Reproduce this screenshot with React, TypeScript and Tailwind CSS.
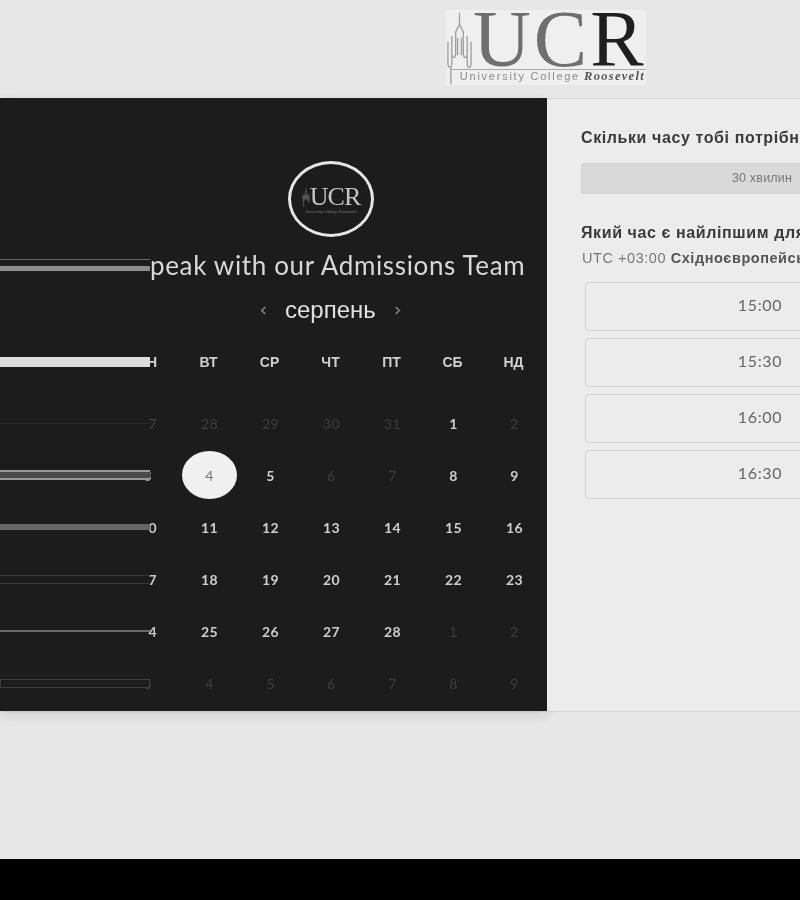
const sans = "font-['Liberation_Sans',Arial,sans-serif]";
const round = "font-['Lato',sans-serif]";

type Day = { t: string; dim?: boolean; sel?: boolean };
const d = (t: string | number, dim = false, sel = false): Day => ({ t: String(t), dim, sel });

const rows: { first: string; bar: string; firstCls: string; tight?: boolean; days: Day[] }[] = [
  { first: "7", bar: "h-px bg-[#2a2a2a]", firstCls: "text-[#444] font-normal", days: [d(28, true), d(29, true), d(30, true), d(31, true), d(1), d(2, true)] },
  { first: "3", tight: true, bar: "h-[10px] border-y-2 border-[#9a9a9a] bg-[#4a4a4a]", firstCls: "text-[#9a9a9a]", days: [d(4, false, true), d(5), d(6, true), d(7, true), d(8), d(9)] },
  { first: "0", bar: "h-[6px] bg-[#666]", firstCls: "text-[#c9c9c9]", days: [d(11), d(12), d(13), d(14), d(15), d(16)] },
  { first: "7", bar: "h-[9px] border-y border-[#3a3a3a]", firstCls: "text-[#c9c9c9]", days: [d(18), d(19), d(20), d(21), d(22), d(23)] },
  { first: "4", bar: "h-[2px] bg-[#6a6a6a]", firstCls: "text-[#c9c9c9]", days: [d(25), d(26), d(27), d(28), d(1, true), d(2, true)] },
  { first: "3", tight: true, bar: "h-[9px] border border-[#3d3d3d] bg-[#1c1c1c]", firstCls: "text-[#444] font-normal", days: [d(4, true), d(5, true), d(6, true), d(7, true), d(8, true), d(9, true)] },
];

function Tower({ className }: { className: string }) {
  return (
    <svg viewBox="0 0 28 76" fill="none" stroke="#a0a0a0" strokeWidth="1.4" className={className}>
      <path d="M14 2V16M10 22L14 14L18 22V46M10 22V46M6 26V44C6 50 10 50 10 44M22 26V44C22 50 18 50 18 44M2 32V54C2 60 6 60 6 54V34M26 32V54C26 60 22 60 22 54V34M12 28V46M16 28V46M5 58V76" />
    </svg>
  );
}

function BigLogo() {
  return (
    <div className="flex w-[200px] h-[75px] bg-[#efefef]">
      <Tower className="w-[27px] h-[75px] shrink-0" />
      <div className="flex flex-col pt-[2px] min-w-0">
        <div className="font-['Liberation_Serif',serif] text-[80px] leading-[54px] tracking-[3px] h-[57px] text-[#6f6f6f] whitespace-nowrap">
          UC<span className="text-[#1f1f1f]">R</span>
        </div>
        <div className="-ml-[22px] w-[195px] border-t border-[#aaa] flex items-center justify-end gap-[4px] pr-[1px] whitespace-nowrap h-[13px]">
          <span className={`${sans} text-[11px] leading-[12px] tracking-[1.75px] text-[#8a8a8a]`}>University College</span>
          <span className="font-['Liberation_Serif',serif] italic font-bold text-[12.5px] leading-[12px] tracking-[1.3px] text-[#555]">Roosevelt</span>
        </div>
      </div>
    </div>
  );
}

export default function App() {
  return (
    <div className="w-[800px] h-[900px] overflow-hidden bg-black flex flex-col">
      <div className="h-[859px] bg-[#e7e7e7] flex flex-col shrink-0 blur-[0.4px]">
        <div className="h-[98px] flex justify-center pt-[10px] pl-[292px] shrink-0">
          <BigLogo />
        </div>
        <div className="h-[614px] flex shrink-0 border-b border-[#d8d8d8]">
          <div className="w-[547px] shrink-0 bg-[#1c1c1c] text-[#e4e4e4] flex flex-col shadow-[0_4px_12px_rgba(0,0,0,0.12)]">
            <div className="pl-[288px] pt-[63px]">
              <div className="w-[86px] h-[76px] rounded-[50%] border-[3px] border-[#e6e6e6] flex items-center justify-center">
                <div className="flex flex-col items-center">
                  <div className="flex items-center">
                    <Tower className="w-[8px] h-[20px]" />
                    <span className="font-['Liberation_Serif',serif] text-[26px] leading-[24px] tracking-[-1px] text-[#c4c4c4]">UCR</span>
                  </div>
                  <span className={`${sans} text-[4px] leading-[5px] text-[#777] whitespace-nowrap`}>University College Roosevelt</span>
                </div>
              </div>
            </div>

            <div className="flex items-center h-[34px] mt-[11px]">
              <div className="w-[150px] shrink-0 flex flex-col">
                <div className="h-px bg-[#6a6a6a]" />
                <div className="h-[5px] mt-[6px] bg-[#8d8d8d]" />
              </div>
              <span className={`${round} text-[26px] leading-[34px] tracking-[0.65px] text-[#d8d8d8] whitespace-nowrap`}>peak with our Admissions Team</span>
            </div>

            <div className={`flex items-center h-[32px] mt-[12px] pl-[259px] ${sans}`}>
              <svg viewBox="0 0 10 12" className="w-[9px] h-[11px] mr-[17px]" fill="none" stroke="#8a8a8a" strokeWidth="1.6"><path d="M7 2L3 6L7 10" /></svg>
              <span className="text-[24px] leading-[32px] text-[#e0e0e0]">серпень</span>
              <svg viewBox="0 0 10 12" className="w-[9px] h-[11px] ml-[17px]" fill="none" stroke="#8a8a8a" strokeWidth="1.6"><path d="M3 2L7 6L3 10" /></svg>
            </div>

            <div className={`flex items-center h-[20px] mt-[26px] ${sans} text-[14px] font-bold text-[#d0d0d0]`}>
              <div className="w-[178px] pr-[21px] shrink-0 flex items-center">
                <div className="w-[150px] h-[10px] bg-[#dcdcdc] relative z-10 shrink-0" />
                <span className="w-[7px] flex justify-end">Н</span>
              </div>
              {["ВТ", "СР", "ЧТ", "ПТ", "СБ", "НД"].map((x) => (
                <div key={x} className="w-[61px] text-center shrink-0">{x}</div>
              ))}
            </div>

            <div className={`flex flex-col mt-[25px] ${round} text-[14px] font-bold tracking-[0.4px]`}>
              {rows.map((r, i) => (
                <div key={i} className="h-[52px] flex items-center shrink-0">
                  <div className="w-[179px] shrink-0 flex items-center">
                    <div className={`w-[150px] shrink-0 relative z-10 ${r.bar}`} />
                    <span className={`${r.tight ? "w-[2px]" : "w-[7px]"} flex justify-end ${r.firstCls}`}>{r.first}</span>
                  </div>
                  {r.days.map((c, j) => (
                    <div key={j} className="w-[61px] shrink-0 flex justify-center">
                      {c.sel ? (
                        <div className="w-[55px] h-[48px] rounded-[50%] bg-[#f0f0f0] text-[#777] font-normal flex items-center justify-center">{c.t}</div>
                      ) : (
                        <span className={c.dim ? "text-[#3e3e3e] font-normal" : "text-[#cfcfcf]"}>{c.t}</span>
                      )}
                    </div>
                  ))}
                </div>
              ))}
            </div>
          </div>

          <div className={`w-[400px] shrink-0 bg-[#ececec] border-t border-[#d9d9d9] pl-[34px] ${sans}`}>
            <div className="mt-[29px] text-[16px] leading-[20px] font-bold tracking-[0.6px] text-[#3a3a3a] whitespace-nowrap">Скільки часу тобі потрібно?</div>
            <div className="mt-[15px] w-[362px] h-[31px] rounded-[3px] bg-[#d9d9d9] border border-[#d2d2d2] flex items-center justify-center text-[12.5px] tracking-[0.2px] text-[#777]">30 хвилин</div>
            <div className="mt-[29px] text-[16px] leading-[20px] font-bold tracking-[0.6px] text-[#3a3a3a] whitespace-nowrap">Який час є найліпшим для тебе?</div>
            <div className="mt-[5px] text-[14.5px] leading-[20px] tracking-[0.55px] text-[#777] whitespace-nowrap pl-[1px]">
              UTC +03:00 <span className="font-bold text-[#555]">Східноєвропейський час</span>
            </div>
            <div className="mt-[14px] ml-[4px] flex flex-col gap-[7px]">
              {["15:00", "15:30", "16:00", "16:30"].map((t) => (
                <div key={t} className={`w-[350px] h-[49px] pb-[3px] rounded-[3px] border border-[#d2d2d2] flex items-center justify-center ${round} text-[16px] tracking-[0.7px] text-[#666]`}>{t}</div>
              ))}
            </div>
          </div>
        </div>
      </div>
    </div>
  );
}
